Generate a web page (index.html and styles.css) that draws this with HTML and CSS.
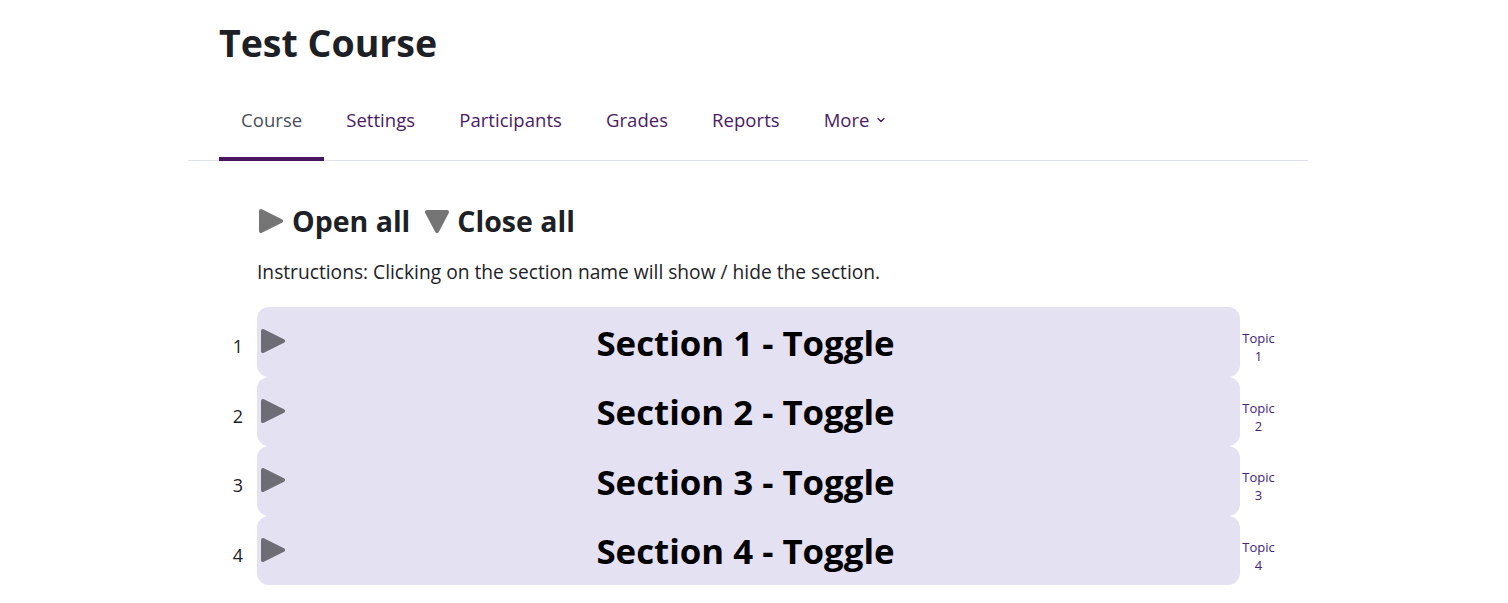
FILE: index.html
```html
<!DOCTYPE html>
<html lang="en">
<head>
<meta charset="utf-8">
<title>Test Course</title>
<link rel="stylesheet" href="styles.css">
</head>
<body>
<div class="page">
  <header class="page-header">
    <h1 class="title">Test Course</h1>
  </header>
  <nav class="secondary-nav">
    <a class="nav-link active" href="#">Course</a>
    <a class="nav-link" href="#">Settings</a>
    <a class="nav-link" href="#">Participants</a>
    <a class="nav-link" href="#">Grades</a>
    <a class="nav-link" href="#">Reports</a>
    <a class="nav-link" href="#">More <svg class="caret" viewBox="0 0 10 10" width="10" height="10"><path d="M2 3.5 L5 6.5 L8 3.5" fill="none" stroke="currentColor" stroke-width="1.4" stroke-linecap="round" stroke-linejoin="round"/></svg></a>
  </nav>
  <main class="content">
    <h2 class="toggle-all">
      <span class="toggle-item"><svg class="tri" viewBox="0 0 28 26" width="28" height="26"><polygon points="4,3 24,13 4,23"/></svg>Open all</span>
      <span class="toggle-item"><svg class="tri" viewBox="0 0 28 26" width="28" height="26"><polygon points="4,4 24,4 14,23"/></svg>Close all</span>
    </h2>
    <p class="instructions">Instructions: Clicking on the section name will show / hide the section.</p>
    <ul class="sections">
      <li class="section">
        <div class="side num">1</div>
        <div class="section-head"><svg class="tri sec-tri" viewBox="0 0 28 26" width="28" height="26"><polygon points="4,3 24,13 4,23"/></svg><h3 class="section-title">Section 1 - Toggle</h3></div>
        <div class="side topic"><a href="#">Topic<br>1</a></div>
      </li>
      <li class="section">
        <div class="side num">2</div>
        <div class="section-head"><svg class="tri sec-tri" viewBox="0 0 28 26" width="28" height="26"><polygon points="4,3 24,13 4,23"/></svg><h3 class="section-title">Section 2 - Toggle</h3></div>
        <div class="side topic"><a href="#">Topic<br>2</a></div>
      </li>
      <li class="section">
        <div class="side num">3</div>
        <div class="section-head"><svg class="tri sec-tri" viewBox="0 0 28 26" width="28" height="26"><polygon points="4,3 24,13 4,23"/></svg><h3 class="section-title">Section 3 - Toggle</h3></div>
        <div class="side topic"><a href="#">Topic<br>3</a></div>
      </li>
      <li class="section">
        <div class="side num">4</div>
        <div class="section-head"><svg class="tri sec-tri" viewBox="0 0 28 26" width="28" height="26"><polygon points="4,3 24,13 4,23"/></svg><h3 class="section-title">Section 4 - Toggle</h3></div>
        <div class="side topic"><a href="#">Topic<br>4</a></div>
      </li>
    </ul>
  </main>
</div>
</body>
</html>
```

FILE: styles.css
```css
html, body {
  margin: 0;
  padding: 0;
  background: #ffffff;
}
body {
  font-family: "Open Sans", "Noto Sans", "DejaVu Sans", sans-serif;
  color: #1d2125;
  overflow: hidden;
}
.page {
  width: 1120px;
  margin-left: 188px;
}
.page-header {
  padding: 0 31px;
}
.title {
  margin: 0;
  padding-top: 19px;
  font-size: 37.5px;
  line-height: 48px;
  font-weight: 700;
  letter-spacing: 0;
  color: #1d2125;
}
.secondary-nav {
  display: flex;
  margin-top: 13px;
  padding: 0 31px;
  border-bottom: 1px solid #dee2e6;
}
.nav-link {
  display: flex;
  align-items: center;
  gap: 6px;
  height: 81px;
  padding: 1px 22px 0;
  font-size: 18.5px;
  letter-spacing: 0.05px;
  color: #4b1a63;
  text-decoration: none;
  box-sizing: border-box;
  border-bottom: 4px solid transparent;
  margin-bottom: -1px;
}
.nav-link.active {
  color: #495057;
  border-bottom-color: #4a1560;
}
.caret {
  margin-top: 1px;
}
.content {
  padding: 0 31px 0 69px;
}
.toggle-all {
  display: flex;
  gap: 13px;
  margin: 42px 0 0 0;
  font-size: 28.5px;
  line-height: 36px;
  font-weight: 700;
  letter-spacing: 0;
}
.toggle-item {
  display: flex;
  align-items: center;
  gap: 6px;
}
.toggle-item:first-child {
  gap: 7px;
}
.tri {
  fill: #757575;
  stroke: #757575;
  stroke-width: 4;
  stroke-linejoin: round;
  filter: blur(0.7px);
  flex: none;
}
.instructions {
  margin: 20px 0 0 0;
  font-size: 19.2px;
  line-height: 26px;
  letter-spacing: 0;
  color: #1d2125;
}
.sections {
  list-style: none;
  margin: 22px 0 0 -38px;
  padding: 0;
}
.section {
  display: flex;
  align-items: flex-start;
}
.side {
  flex: none;
  width: 38px;
  text-align: center;
}
.num {
  padding-top: 27px;
  font-size: 18px;
  line-height: 24px;
}
.topic {
  width: 37px;
  padding-top: 22px;
  font-size: 13px;
  line-height: 18px;
}
.topic a {
  color: #45237a;
  text-decoration: none;
}
.section-head {
  flex: none;
  width: 983px;
  height: 69.5px;
  box-sizing: border-box;
  background: #e3e1f2;
  border-radius: 12px;
  display: flex;
  align-items: center;
  position: relative;
}
.sec-tri {
  position: absolute;
  left: 2px;
  top: 21px;
  fill: #6d6d75;
  stroke: #6d6d75;
}
.section-title {
  margin: 0;
  width: 100%;
  box-sizing: border-box;
  text-align: center;
  font-size: 34.8px;
  line-height: 44px;
  font-weight: 700;
  letter-spacing: 0;
  color: #000000;
  padding: 2px 6px 0 0;
}
```
